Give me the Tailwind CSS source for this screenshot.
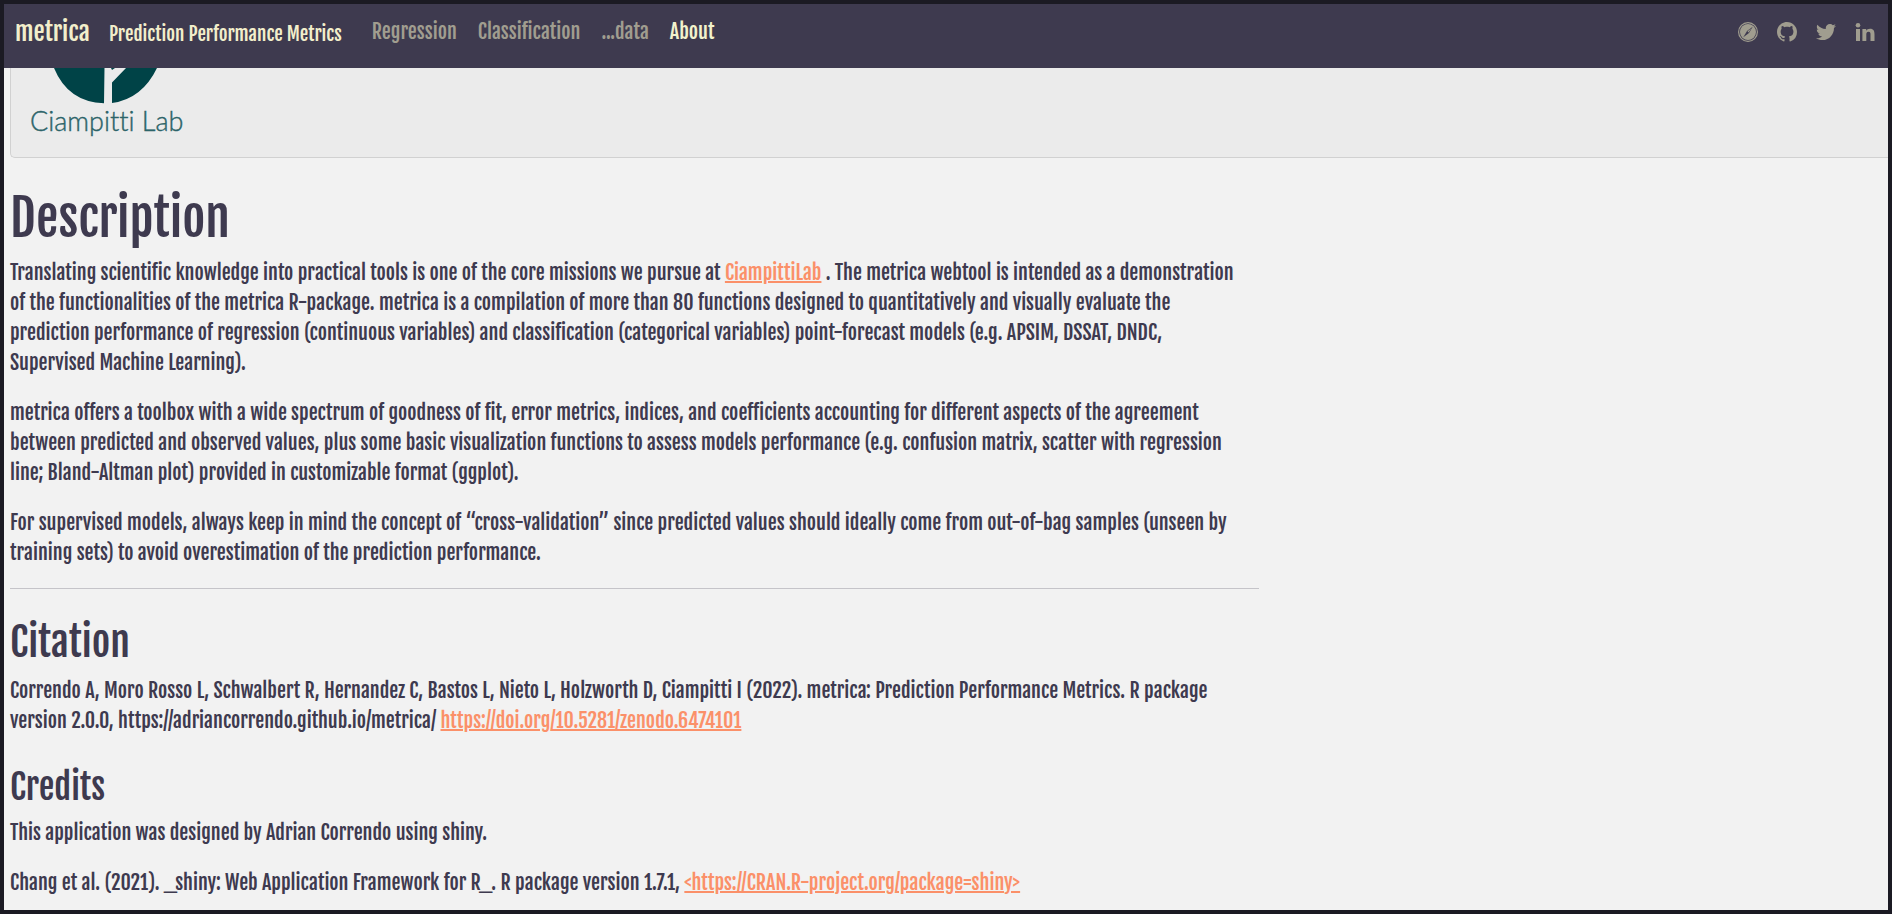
<!DOCTYPE html>
<html lang="en">
<head>
<meta charset="utf-8">
<title>metrica: Prediction Performance Metrics</title>
<script src="https://cdn.jsdelivr.net/npm/@tailwindcss/browser@4"></script>
</head>
<body class="min-h-screen bg-[#f2f2f2] font-['Fjalla_One','Roboto_Condensed','Open_Sans_Condensed',sans-serif] text-xl leading-[30px] text-[#3e3a4f]">
<div class="flex min-h-screen flex-col border-4 border-[#1b1a23]">
  <header class="flex h-16 shrink-0 items-start justify-between bg-[#3e3a4f] pt-[13px] pr-[13px] pl-[11px]">
    <div class="flex items-start">
      <div class="mr-[30px] flex items-baseline gap-[19px] text-[#f2eecb]">
        <a href="#" class="text-[25px]">metrica</a>
        <span class="text-[19px]">Prediction Performance Metrics</span>
      </div>
      <nav class="flex gap-[21px] text-[#a09d8f]">
        <a href="#regression">Regression</a>
        <a href="#classification">Classification</a>
        <a href="#data">...data</a>
        <a href="#about" class="text-[#f2f2cc]" aria-current="page">About</a>
      </nav>
    </div>
    <div class="flex items-center gap-[19px] pt-[5px] text-[#a09d8f]">
      <a href="#site" aria-label="Website">
        <svg class="size-5" viewBox="0 0 20 20" fill="none"><circle cx="10" cy="10" r="9.4" stroke="currentColor" stroke-width="1.2"/><circle cx="10" cy="10" r="8" fill="currentColor"/><path d="M14.700 4.800 11 11.100 5.300 15.200 9 8.900Z" fill="#3e3a4f"/><path d="m13.400 6.200-3.900 3.100 1.100 1.100Z" fill="currentColor"/></svg>
      </a>
      <a href="#github" aria-label="GitHub">
        <svg class="size-5" viewBox="0 0 16 16" fill="currentColor"><path d="M8 0C3.58 0 0 3.58 0 8c0 3.54 2.29 6.53 5.47 7.59.4.07.55-.17.55-.38 0-.19-.01-.82-.01-1.49-2.01.37-2.53-.49-2.69-.94-.09-.23-.48-.94-.82-1.13-.28-.15-.68-.52-.01-.53.63-.01 1.08.58 1.23.82.72 1.21 1.87.87 2.33.66.07-.52.28-.87.51-1.07-1.78-.2-3.64-.89-3.64-3.95 0-.87.31-1.59.82-2.15-.08-.2-.36-1.02.08-2.12 0 0 .67-.21 2.2.82.64-.18 1.32-.27 2-.27s1.36.09 2 .27c1.53-1.04 2.2-.82 2.2-.82.44 1.1.16 1.92.08 2.12.51.56.82 1.27.82 2.15 0 3.07-1.87 3.75-3.65 3.95.29.25.54.73.54 1.48 0 1.07-.01 1.93-.01 2.2 0 .21.15.46.55.38A8.01 8.01 0 0 0 16 8c0-4.42-3.58-8-8-8Z"/></svg>
      </a>
      <a href="#twitter" aria-label="Twitter">
        <svg class="size-5" viewBox="0 0 512 512" fill="currentColor"><path d="M459.37 151.716c.325 4.548.325 9.097.325 13.645 0 138.72-105.583 298.558-298.558 298.558-59.452 0-114.68-17.219-161.137-47.106 8.447.974 16.568 1.299 25.34 1.299 49.055 0 94.213-16.568 130.274-44.832-46.132-.975-84.792-31.188-98.112-72.772 6.498.974 12.995 1.624 19.818 1.624 9.421 0 18.843-1.3 27.614-3.573-48.081-9.747-84.143-51.98-84.143-102.985v-1.299c13.969 7.797 30.214 12.67 47.431 13.319-28.264-18.843-46.781-51.005-46.781-87.391 0-19.492 5.197-37.36 14.294-52.954 51.655 63.675 129.3 105.258 216.365 109.807-1.624-7.797-2.599-15.918-2.599-24.04 0-57.828 46.782-104.934 104.934-104.934 30.213 0 57.502 12.67 76.67 33.137 23.715-4.548 46.456-13.32 66.599-25.34-7.798 24.366-24.366 44.833-46.132 57.827 21.117-2.273 41.584-8.122 60.426-16.243-14.292 20.791-32.161 39.308-52.628 54.253z"/></svg>
      </a>
      <a href="#linkedin" aria-label="LinkedIn">
        <svg class="size-5" viewBox="0 0 20 20" fill="currentColor"><path d="M1 7h4v12H1ZM7.400 7h3.800v1.700C11.800 7.600 13.200 6.700 15 6.700c3.700 0 4.500 2.400 4.500 5.600V19h-4v-6c0-1.400 0-3.200-2-3.200s-2.200 1.500-2.200 3.100V19H7.400Z"/><circle cx="3" cy="3.200" r="2.300"/></svg>
      </a>
    </div>
  </header>
  <main class="flex-1 pl-[6px]">
    <div class="rounded-bl-[5px] border-b border-l border-[#d1d1d1] bg-[#ebebeb] pb-5 pl-[19px]">
      <svg class="h-[69px] w-[154px]" viewBox="0 0 154 69" role="img" aria-label="Ciampitti Lab">
        <path d="M24 0Q38 34 74 35.300L74.500 0ZM82 35Q112 31 127 0H96L82 14.500ZM81 0h4l-3 2Z" fill="#004347"/>
        <text x="0" y="63" class="fill-[#2c6469] stroke-[#2c6469] font-['Lato'] text-[27px] font-light [font-variant-ligatures:none] [stroke-width:0.4]">Ciampitti Lab</text>
      </svg>
    </div>
    <article class="pr-1 whitespace-nowrap">
      <h1 class="mt-[30px] mb-[10px] text-[50px] leading-[60px]">Description</h1>
      <p>Translating scientific knowledge into practical tools is one of the core missions we pursue at <a href="#lab" class="text-[#fb9069] underline decoration-2">CiampittiLab</a> . The metrica webtool is intended as a demonstration<br>of the functionalities of the metrica R-package. metrica is a compilation of more than 80 functions designed to quantitatively and visually evaluate the<br>prediction performance of regression (continuous variables) and classification (categorical variables) point-forecast models (e.g. APSIM, DSSAT, DNDC,<br>Supervised Machine Learning).</p>
      <p class="mt-5">metrica offers a toolbox with a wide spectrum of goodness of fit, error metrics, indices, and coefficients accounting for different aspects of the agreement<br>between predicted and observed values, plus some basic visualization functions to assess models performance (e.g. confusion matrix, scatter with regression<br>line; Bland-Altman plot) provided in customizable format (ggplot).</p>
      <p class="mt-5">For supervised models, always keep in mind the concept of “cross-validation” since predicted values should ideally come from out-of-bag samples (unseen by<br>training sets) to avoid overestimation of the prediction performance.</p>
      <hr class="mt-5 w-2/3 border-[#c5c4c9]">
      <h2 class="mt-[29px] mb-[10px] text-[40px] leading-[48px]">Citation</h2>
      <p>Correndo A, Moro Rosso L, Schwalbert R, Hernandez C, Bastos L, Nieto L, Holzworth D, Ciampitti I (2022). metrica: Prediction Performance Metrics. R package<br>version 2.0.0, https://adriancorrendo.github.io/metrica/ <a href="#doi" class="text-[#fb9069] underline decoration-2">https://doi.org/10.5281/zenodo.6474101</a></p>
      <h3 class="mt-[30px] mb-[10px] text-[35px] leading-[42px]">Credits</h3>
      <p>This application was designed by Adrian Correndo using shiny.</p>
      <p class="mt-5">Chang et al. (2021). _shiny: Web Application Framework for R_. R package version 1.7.1, <a href="#shiny" class="text-[#fb9069] underline decoration-2">&lt;https://CRAN.R-project.org/package=shiny&gt;</a></p>
    </article>
  </main>
</div>
</body>
</html>
